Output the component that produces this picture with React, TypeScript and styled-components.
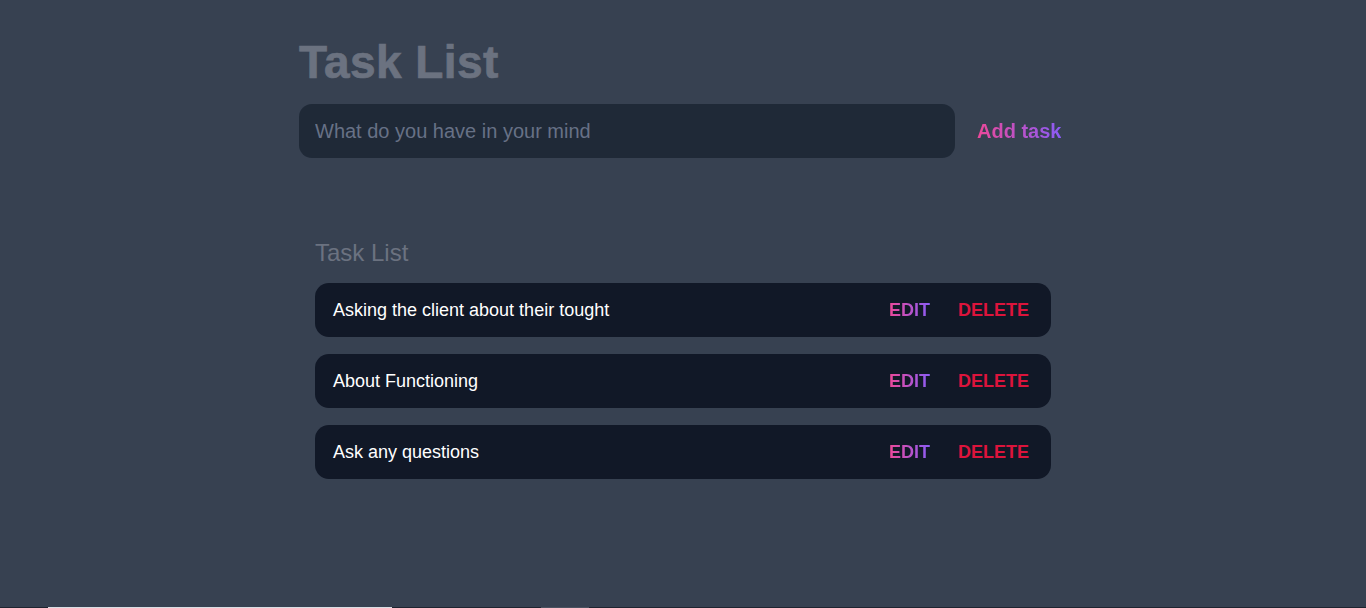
import React from "react";
import styled, { createGlobalStyle, css } from "styled-components";

const Global = createGlobalStyle`
  html, body { margin: 0; padding: 0; background: #374151; }
  body { font-family: "Liberation Sans", Arial, sans-serif; }
  * { box-sizing: border-box; }
`;

const gradientText = css`
  background-image: linear-gradient(to right, #ec4899, #8b5cf6);
  -webkit-background-clip: text;
  background-clip: text;
  color: transparent;
`;

const Page = styled.div`
  min-height: 608px;
  display: flex;
  flex-direction: column;
`;

const Container = styled.main`
  width: 768px;
  margin: 0 auto;
  padding-top: 36px;
`;

const Title = styled.h1`
  margin: 0 0 15px;
  font-size: 46px;
  line-height: 53px;
  font-weight: 700;
  letter-spacing: 0.4px;
  color: #6b7280;
  -webkit-text-stroke: 0.7px #6b7280;
`;

const Form = styled.form`
  display: flex;
  align-items: center;
`;

const Input = styled.input`
  width: 656px;
  height: 54px;
  border: none;
  outline: none;
  border-radius: 13px;
  background: #1f2937;
  padding: 0 16px;
  font-family: inherit;
  font-size: 20px;
  color: #e5e7eb;
  &::placeholder { color: #677186; }
`;

const AddButton = styled.button`
  border: none;
  background: none;
  padding: 0 0 0 22px;
  font-family: inherit;
  font-size: 20px;
  font-weight: 700;
  cursor: pointer;
  span { ${gradientText} }
`;

const Section = styled.section`
  margin-top: 80px;
  padding: 0 16px;
`;

const SubTitle = styled.h2`
  margin: 0 0 16px;
  padding-top: 1px;
  font-size: 24px;
  line-height: 28px;
  font-weight: 400;
  color: #6b7280;
`;

const List = styled.ul`
  list-style: none;
  margin: 0;
  padding: 0;
  display: flex;
  flex-direction: column;
  gap: 17px;
`;

const Row = styled.li`
  height: 54px;
  display: flex;
  align-items: center;
  background: #111827;
  border-radius: 14px;
  padding: 0 22px 0 18px;
`;

const RowText = styled.span`
  flex: 1;
  color: #ffffff;
  font-size: 18px;
`;

const Action = styled.button<{ $danger?: boolean }>`
  border: none;
  background: none;
  padding: 0;
  margin-left: ${(p) => (p.$danger ? "28px" : "0")};
  font-family: inherit;
  font-size: 18px;
  font-weight: 700;
  cursor: pointer;
  span {
    ${(p) => (p.$danger ? css`color: #dc143c;` : gradientText)}
  }
`;

const BottomBar = styled.div`
  margin-top: auto;
  height: 1px;
  background: #1f2430;
  display: flex;
`;

const BarSegment = styled.div<{ $w: number; $ml: number; $c: string }>`
  width: ${(p) => p.$w}px;
  margin-left: ${(p) => p.$ml}px;
  background: ${(p) => p.$c};
`;

const tasks = [
  "Asking the client about their tought",
  "About Functioning",
  "Ask any questions",
];

export default function App() {
  return (
    <Page>
      <Global />
      <Container>
        <Title>Task List</Title>
        <Form onSubmit={(e) => e.preventDefault()}>
          <Input placeholder="What do you have in your mind" />
          <AddButton type="submit"><span>Add task</span></AddButton>
        </Form>
        <Section>
          <SubTitle>Task List</SubTitle>
          <List>
            {tasks.map((t) => (
              <Row key={t}>
                <RowText>{t}</RowText>
                <Action><span>EDIT</span></Action>
                <Action $danger><span>DELETE</span></Action>
              </Row>
            ))}
          </List>
        </Section>
      </Container>
      <BottomBar>
        <BarSegment $w={344} $ml={48} $c="#d9dde3" />
        <BarSegment $w={48} $ml={149} $c="#4b5260" />
      </BottomBar>
    </Page>
  );
}
